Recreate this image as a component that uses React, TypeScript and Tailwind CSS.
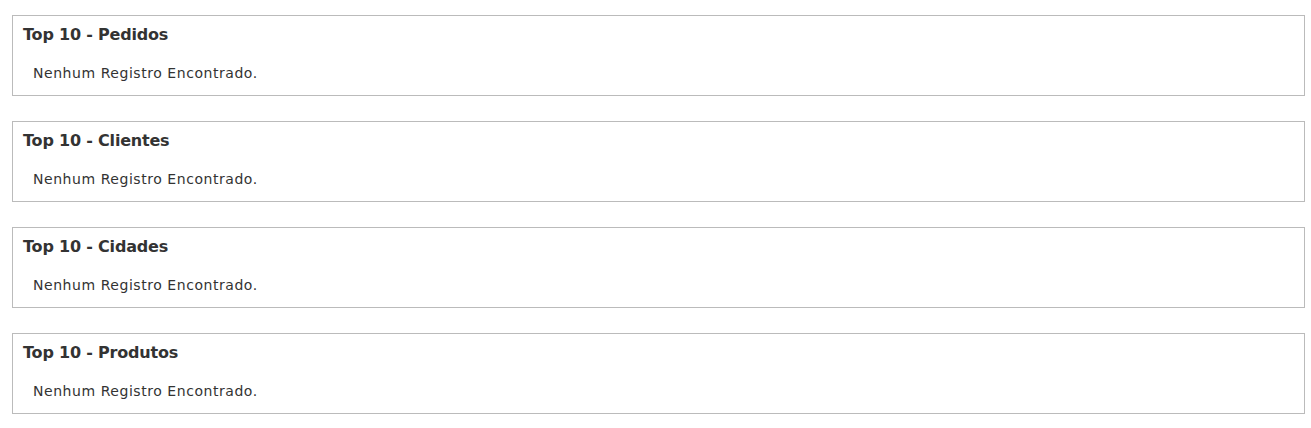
import React from "react";

const sections = ["Pedidos", "Clientes", "Cidades", "Produtos"];

export default function App() {
  return (
    <div
      className="bg-white pt-[15px] pl-[12px] pr-[6px] flex flex-col gap-[25px] text-[#333333]"
      style={{ fontFamily: '"DejaVu Sans", "Noto Sans", sans-serif' }}
    >
      {sections.map((s) => (
        <div key={s} className="border border-[#bbbbbb] h-[81px] px-[10px] pt-[7px]">
          <div className="text-[16px] font-bold leading-[24px] tracking-[-0.2px]">Top 10 - {s}</div>
          <div className="text-[14px] leading-[20px] pl-[10px] mt-[16px] tracking-[0.55px]">Nenhum Registro Encontrado.</div>
        </div>
      ))}
    </div>
  );
}
